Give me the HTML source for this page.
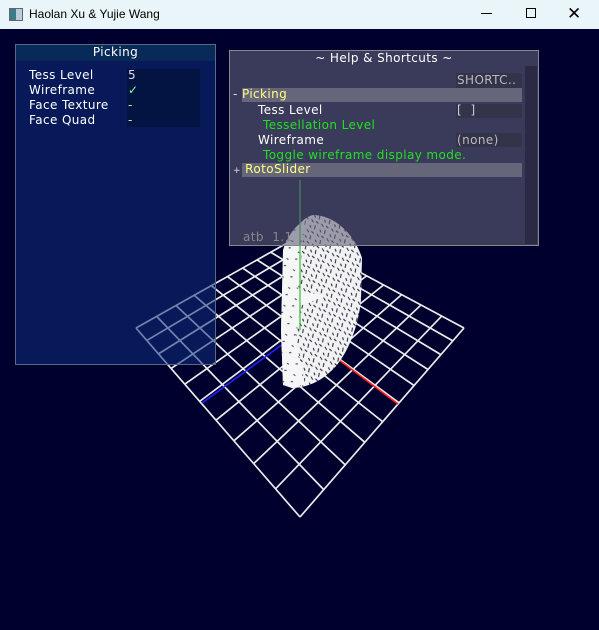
<!DOCTYPE html>
<html><head><meta charset="utf-8"><style>
body{margin:0;width:599px;height:630px;overflow:hidden;background:#00002e;font-family:"DejaVu Sans","Liberation Sans",sans-serif;position:relative}
.tb{position:absolute;left:0;top:0;width:599px;height:29px;background:#e9f5f9;font-family:"Liberation Sans",sans-serif;font-size:12px;color:#000}
.p{position:absolute;font-size:12px;color:#fff;white-space:nowrap;letter-spacing:.4px}
</style></head><body>
<div class="tb">
<div style="position:absolute;left:9px;top:8px;width:12px;height:11px;border:1px solid #666;background:linear-gradient(90deg,#3a7a8a 50%,#bcd 50%)"></div>
<div style="position:absolute;left:29px;top:7px">Haolan Xu &amp; Yujie Wang</div>
<div style="position:absolute;left:481px;top:13px;width:11px;height:1px;background:#000"></div>
<div style="position:absolute;left:526px;top:8px;width:8px;height:8px;border:1px solid #000"></div>
<div style="position:absolute;left:567px;top:4px;font-size:17px">✕</div>
</div>
<svg id="s" width="599" height="630" style="position:absolute;left:0;top:0">
<defs>
<pattern id="wf" width="11" height="11" patternUnits="userSpaceOnUse" patternTransform="rotate(25)">
<rect width="11" height="11" fill="#f2f2f2"/>
<path d="M1,1 L4,3 M7,5 L8,9 M2,7 L4,9 M6,1 L9,2" stroke="#1a1a3a" stroke-width="1"/>
</pattern>
<pattern id="wf2" width="13" height="13" patternUnits="userSpaceOnUse" patternTransform="rotate(-30)">
<path d="M2,3 L3,5 M9,8 L11,9" stroke="#3a3a5a" stroke-width="1"/>
</pattern>
</defs>
<g id="g" stroke="#ececec" stroke-width="1.7" fill="none"></g>
<line x1="283" y1="344" x2="202" y2="403" stroke="#2020ff" stroke-width="1.6"/>
<line x1="303" y1="333" x2="398" y2="404" stroke="#ff2020" stroke-width="1.6"/>
<path d="M313,215 C335,215 355,235 362,258 L361,300 C358,330 345,360 330,372 C320,382 305,388 292,388 L283,385 L281,330 L283,260 C290,235 300,218 313,215Z" fill="url(#wf)"/>
<path d="M283,250 C288,235 296,225 305,220 L302,250 L298,290 L325,296 L300,306 L296,340 L305,385 L292,388 L283,385 L281,330 Z" fill="#f6f6f6"/>
<path d="M283,250 C288,235 296,225 305,220 L302,250 L298,290 L300,306 L296,340 L305,385 L292,388 L283,385 L281,330 Z" fill="url(#wf2)"/>
<line x1="300" y1="180" x2="300" y2="330" stroke="#30c030" stroke-width="1.2"/>
</svg>
<div style="position:absolute;left:15px;top:44px;width:199px;height:319px;background:rgba(12,45,125,.55);border:1px solid #5a6a80"></div>
<div style="position:absolute;left:16px;top:45px;width:199px;height:16px;background:rgba(10,60,90,.5)"></div>
<div class="p" style="left:15px;top:45px;width:201px;text-align:center">Picking</div>
<div style="position:absolute;left:127px;top:69px;width:73px;height:58px;background:rgba(0,15,40,.45)"></div>
<div class="p" style="left:29px;top:68px;line-height:15px">Tess Level<br>Wireframe<br>Face Texture<br>Face Quad</div>
<div class="p" style="left:128px;top:68px;line-height:15px;color:#dde">5<br><b style="color:#8f8">✓</b><br><span style="color:#9f9">-</span><br><span style="color:#9f9">-</span></div>
<div style="position:absolute;left:229px;top:50px;width:308px;height:194px;background:rgba(97,97,122,.6);border:1px solid #888"></div>
<div style="position:absolute;left:525px;top:66px;width:12px;height:178px;background:rgba(20,20,35,.4)"></div>
<div class="p" style="left:229px;top:51px;width:310px;text-align:center">~ Help &amp; Shortcuts ~</div>
<div style="position:absolute;left:456px;top:73px;width:66px;height:15px;background:#33334a"></div>
<div class="p" style="left:457px;top:73px;color:#bbb">SHORTC..</div>
<div style="position:absolute;left:242px;top:88px;width:280px;height:14px;background:#66667a"></div>
<div class="p" style="left:233px;top:87px;color:#ffff80"><span style="color:#ddd">-</span> Picking</div>
<div class="p" style="left:258px;top:103px">Tess Level</div>
<div style="position:absolute;left:456px;top:104px;width:66px;height:14px;background:#33334a"></div>
<div class="p" style="left:457px;top:103px;color:#ccd">[&nbsp; ]</div>
<div class="p" style="left:263px;top:118px;color:#20e020">Tessellation Level</div>
<div class="p" style="left:258px;top:133px">Wireframe</div>
<div style="position:absolute;left:456px;top:133px;width:66px;height:14px;background:#33334a"></div>
<div class="p" style="left:457px;top:133px;color:#bbb">(none)</div>
<div class="p" style="left:263px;top:148px;color:#20e020">Toggle wireframe display mode.</div>
<div style="position:absolute;left:242px;top:163px;width:280px;height:14px;background:#66667a"></div>
<div class="p" style="left:233px;top:162px;color:#ffff80"><span style="color:#ddd;font-size:9px">+</span> RotoSlider</div>
<div class="p" style="left:243px;top:230px;color:#888">atb&nbsp; 1.1</div>
<script>
var P=[[296,238],[464,328],[300,517],[136,328]];
function H(){var x0=P[0][0],y0=P[0][1],x1=P[1][0],y1=P[1][1],x2=P[2][0],y2=P[2][1],x3=P[3][0],y3=P[3][1];
var dx1=x1-x2,dx2=x3-x2,dy1=y1-y2,dy2=y3-y2,sx=x0-x1+x2-x3,sy=y0-y1+y2-y3;
var d=dx1*dy2-dx2*dy1,g=(sx*dy2-dx2*sy)/d,h=(dx1*sy-sx*dy1)/d;
return function(u,v){var w=g*u+h*v+1;return[(x0+(x1-x0+g*x1)*u+(x3-x0+h*x3)*v)/w,(y0+(y1-y0+g*y1)*u+(y3-y0+h*y3)*v)/w]}}
var f=H(),s='';
for(var i=0;i<=10;i++){var t=i/10,a=f(t,0),b=f(t,1),c=f(0,t),e=f(1,t);
s+='<line x1="'+a[0]+'" y1="'+a[1]+'" x2="'+b[0]+'" y2="'+b[1]+'"/><line x1="'+c[0]+'" y1="'+c[1]+'" x2="'+e[0]+'" y2="'+e[1]+'"/>';}
document.getElementById('g').innerHTML=s;
</script>
</body></html>
